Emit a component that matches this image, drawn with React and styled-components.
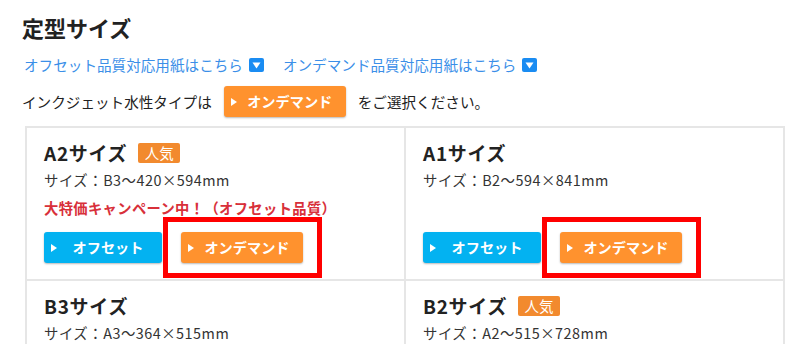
import React from 'react';
import styled, { createGlobalStyle, css } from 'styled-components';

const GlobalStyle = createGlobalStyle`
  html, body {
    margin: 0;
    padding: 0;
    overflow: hidden;
    background: #fff;
  }
  body {
    font-family: "Noto Sans CJK JP", "Noto Sans", sans-serif;
    color: #333;
  }
`;

const Page = styled.div`
  padding: 12px 0 0 22px;
`;

const Title = styled.h2`
  margin: 0 0 11px;
  font-size: 22px;
  line-height: 30px;
  font-weight: 700;
  color: #222;
`;

const LinkRow = styled.div`
  display: flex;
  align-items: center;
  gap: 19px;
  height: 24px;
  padding-left: 2px;
`;

const PaperLink = styled.a`
  display: flex;
  align-items: center;
  gap: 6px;
  font-size: 14.6px;
  line-height: 24px;
  color: #3b8fe8;
  text-decoration: none;
`;

const DownBox = styled.span`
  display: inline-flex;
  align-items: center;
  justify-content: center;
  width: 15px;
  height: 14px;
  border-radius: 2px;
  background: #1a8cf2;
`;

const NoteRow = styled.div`
  display: flex;
  align-items: center;
  gap: 12px;
  margin-top: 9px;
  font-size: 14.6px;
  line-height: 31px;
  color: #222;
`;

const colors = {
  offset: '#03b2f1',
  demand: '#ff922e',
};

const Button = styled.a`
  position: relative;
  display: inline-flex;
  align-items: center;
  justify-content: center;
  box-sizing: border-box;
  width: ${(p) => p.$w}px;
  height: 31px;
  padding-left: 10px;
  border-radius: 3px;
  background: ${(p) => colors[p.$kind]};
  box-shadow: 0 1px 2px rgba(0, 0, 0, 0.28);
  color: #fff;
  font-size: 14.2px;
  font-weight: 700;
  line-height: 1;
  text-decoration: none;

  &::before {
    content: '';
    position: absolute;
    left: 7px;
    top: 50%;
    margin-top: -4px;
    border-style: solid;
    border-width: 4px 0 4px 6px;
    border-color: transparent transparent transparent #fff;
  }
`;

const Grid = styled.div`
  display: grid;
  grid-template-columns: 1fr 1fr;
  width: 760px;
  margin: 9px 0 0 3px;
  box-sizing: border-box;
  border-top: 2px solid #e6e6e6;
  border-left: 2px solid #e6e6e6;
`;

const Cell = styled.div`
  display: flex;
  flex-direction: column;
  padding: 12px 17px 16px;
  border-right: 2px solid #e6e6e6;
  border-bottom: 2px solid #e6e6e6;
`;

const SizeTitle = styled.h3`
  display: flex;
  align-items: center;
  gap: 11px;
  margin: 0;
  font-size: 19px;
  line-height: 26px;
  font-weight: 700;
  color: #222;
  letter-spacing: 0.7px;
`;

const Badge = styled.span`
  display: inline-flex;
  align-items: center;
  justify-content: center;
  width: 42px;
  height: 20px;
  border-radius: 2px;
  background: #f28a2e;
  color: #fff;
  font-size: 14.5px;
  font-weight: 400;
  letter-spacing: 0;
`;

const SizeText = styled.p`
  margin: 2px 0 0;
  font-size: 14.4px;
  line-height: 24px;
  color: #333;
  letter-spacing: 0.5px;
`;

const Campaign = styled.p`
  margin: 4px 0 0;
  font-size: 14.3px;
  line-height: 24px;
  font-weight: 700;
  color: #d8303a;
  letter-spacing: 0.35px;
`;

const Buttons = styled.div`
  display: flex;
  gap: 19px;
  margin-top: auto;
  padding-top: 12px;
`;

const Highlight = styled.span`
  position: relative;
  display: inline-flex;

  ${(p) =>
    p.$on &&
    css`
      &::after {
        content: '';
        position: absolute;
        top: -15px;
        bottom: -15px;
        left: -18px;
        right: -19px;
        border: 5px solid #ff0000;
        pointer-events: none;
      }
    `}
`;

const sizes = [
  { name: 'A2サイズ', popular: true, size: 'B3〜420×594mm', campaign: true, mark: true, buttons: true },
  { name: 'A1サイズ', popular: false, size: 'B2〜594×841mm', campaign: false, mark: true, buttons: true },
  { name: 'B3サイズ', popular: false, size: 'A3〜364×515mm', campaign: false, mark: false, buttons: false },
  { name: 'B2サイズ', popular: true, size: 'A2〜515×728mm', campaign: false, mark: false, buttons: false },
];

const DownIcon = () => (
  <DownBox>
    <svg width="9" height="7" viewBox="0 0 9 7">
      <path d="M0.5 0.5h8L4.5 6.5z" fill="#fff" />
    </svg>
  </DownBox>
);

export default function App() {
  return (
    <Page>
      <GlobalStyle />
      <Title>定型サイズ</Title>
      <LinkRow>
        <PaperLink href="#">
          オフセット品質対応用紙はこちら
          <DownIcon />
        </PaperLink>
        <PaperLink href="#">
          オンデマンド品質対応用紙はこちら
          <DownIcon />
        </PaperLink>
      </LinkRow>
      <NoteRow>
        <span>インクジェット水性タイプは</span>
        <Button $kind="demand" $w={122} href="#">
          オンデマンド
        </Button>
        <span>をご選択ください。</span>
      </NoteRow>
      <Grid>
        {sizes.map((s) => (
          <Cell key={s.name}>
            <SizeTitle>
              {s.name}
              {s.popular && <Badge>人気</Badge>}
            </SizeTitle>
            <SizeText>サイズ：{s.size}</SizeText>
            {s.campaign && <Campaign>大特価キャンペーン中！（オフセット品質）</Campaign>}
            {s.buttons && (
              <Buttons>
                <Button $kind="offset" $w={118} href="#">
                  オフセット
                </Button>
                <Highlight $on={s.mark}>
                  <Button $kind="demand" $w={122} href="#">
                    オンデマンド
                  </Button>
                </Highlight>
              </Buttons>
            )}
          </Cell>
        ))}
      </Grid>
    </Page>
  );
}
